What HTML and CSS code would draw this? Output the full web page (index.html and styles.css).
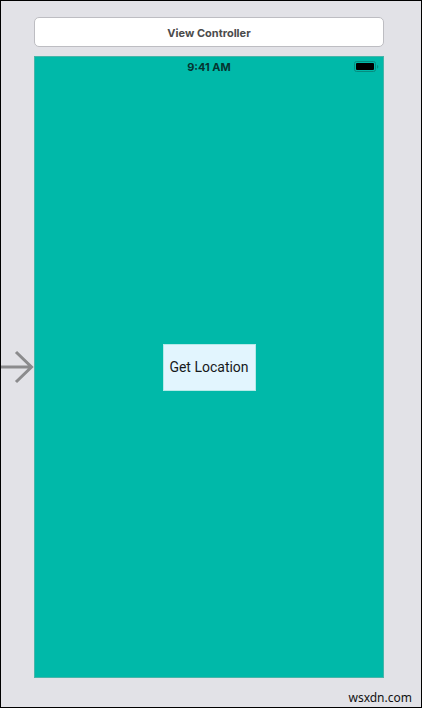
FILE: index.html
```
<!DOCTYPE html>
<html lang="en">
<head>
  <meta charset="UTF-8" />
  <meta name="viewport" content="width=device-width, initial-scale=1.0" />
  <title>View Controller</title>
  <link rel="stylesheet" href="styles.css">
</head>
<body>
  <div class="canvas">
    <header class="scene-title">View Controller</header>

    <main class="screen">
      <!-- Entry point arrow -->
      <svg class="entry-arrow" width="33" height="34" viewBox="0 0 33 34" aria-hidden="true">
        <path d="M0 17H30M15 2L30.500 17L15 32" />
      </svg>

      <div class="status-bar">
        <span class="time">9:41 AM</span>
        <svg class="battery" width="25" height="12" viewBox="0 0 25 12" aria-hidden="true">
          <rect class="battery-case" x="0.500" y="0.500" width="21" height="10" rx="2" />
          <rect x="2" y="2" width="18" height="7" rx="1" />
          <path class="battery-tip" d="M23 4v3.500c1-.3 1.300-1 1.300-1.750S24 4.300 23 4z" />
        </svg>
      </div>

      <div class="content">
        <button type="button" class="location-button">Get Location</button>
      </div>
    </main>

    <footer class="credit">wsxdn.com</footer>
  </div>
</body>
</html>
```

FILE: styles.css
```
* {
  box-sizing: border-box;
}

body {
  margin: 0;
  font-family: Inter, "Liberation Sans", sans-serif;
}

.canvas {
  display: flex;
  flex-direction: column;
  min-height: 100vh;
  padding: 16px 37px 0 33px;
  border: 1px solid #000;
  background: #e2e2e7;
}

.scene-title {
  height: 30px;
  margin-bottom: 9px;
  border: 1px solid #bdbdc2;
  border-radius: 5px;
  background: #fff;
  color: #4b4b4b;
  font-size: 11px;
  font-weight: 700;
  line-height: 30px;
  text-align: center;
}

.screen {
  position: relative;
  display: flex;
  flex: 1;
  flex-direction: column;
  border: 1px solid #48b5a9;
  background: #00b9a9;
}

.entry-arrow {
  position: absolute;
  top: 50%;
  left: -34px;
  transform: translateY(-50%);
  fill: none;
  stroke: #8b8b8d;
  stroke-width: 3;
}

.status-bar {
  display: grid;
  grid-template-columns: 1fr auto 1fr;
  align-items: center;
  height: 20px;
  padding: 0 4px;
  color: #053430;
  font-size: 11px;
  font-weight: 700;
}

.time {
  grid-column: 2;
}

.battery {
  justify-self: end;
  fill: #000;
}

.battery-case {
  fill: none;
  stroke: #078c7f;
}

.battery-tip {
  fill: #078c7f;
}

.content {
  display: flex;
  flex: 1;
  align-items: center;
  justify-content: center;
  padding-bottom: 20px;
}

.location-button {
  min-width: 93px;
  height: 47px;
  padding: 0 5px;
  border: 1px solid #b5eae8;
  background: #e2f5fe;
  color: #16191b;
  font-family: Roboto, "Liberation Sans", sans-serif;
  font-size: 14px;
  white-space: nowrap;
}

.credit {
  height: 29px;
  margin-right: -28px;
  color: #111;
  font-family: "Noto Sans", sans-serif;
  font-size: 12px;
  line-height: 40px;
  text-align: right;
}
```
